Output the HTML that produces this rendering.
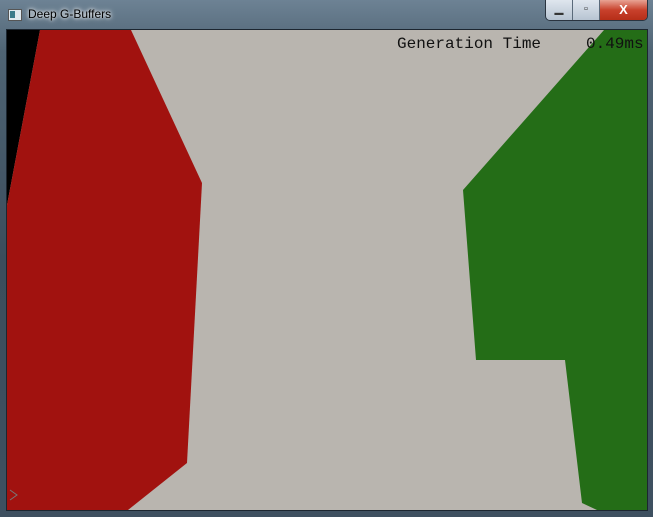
<!DOCTYPE html>
<html><head><style>
html,body{margin:0;padding:0;width:653px;height:517px;overflow:hidden;background:#3a4a5a}
.frame{position:absolute;left:0;top:0;width:653px;height:517px;background:linear-gradient(180deg,#6d8294 0%,#4f6474 10%,#3b4d5c 50%,#3e5060 100%)}
.title{position:absolute;left:28px;top:7px;font:12px "Liberation Sans",sans-serif;color:#000;text-shadow:0 0 6px #fff,0 0 3px #fff}
.ico{position:absolute;left:8px;top:9px;width:12px;height:10px;background:#dfe8ee;border:1px solid #555}
.ico:before{content:"";position:absolute;left:1px;top:1px;width:5px;height:7px;background:#3a7a8a}
.btns{position:absolute;left:545px;top:0;width:101px;height:20px;border:1px solid #2a3440;border-top:none;border-radius:0 0 5px 5px;overflow:hidden;display:flex}
.b{height:20px;background:linear-gradient(#dfe6ee,#b7c4d2);border-right:1px solid #5a6a7a;color:#333;font:bold 11px "Liberation Sans",sans-serif;text-align:center;line-height:19px}
.x{background:linear-gradient(#e8a394,#c8412c 50%,#b62e18);color:#fff;font-size:13px;flex:1;border:none}
svg{position:absolute;left:0;top:0}
.txt{position:absolute;top:35px;font:16px "Liberation Mono","DejaVu Sans Mono",monospace;color:#111;white-space:pre}
</style></head><body>
<div class="frame"></div>
<div class="ico"></div>
<div class="title">Deep G-Buffers</div>
<div class="btns"><div class="b" style="width:26px">▁</div><div class="b" style="width:26px">▫</div><div class="b x">X</div></div>
<svg width="653" height="517">
<rect x="6" y="29" width="642" height="482" fill="#1c2630"/>
<rect x="7" y="30" width="640" height="480" fill="#b9b5af"/>
<polygon points="7,30 40,30 7,205" fill="#000"/>
<polygon points="40,30 131,30 202,183 187,463 128,510 7,510 7,205" fill="#a1120f"/>
<polygon points="604,30 647,30 647,510 597,510 582,503 565,360 476,360 463,190" fill="#246d17"/>
<polyline points="10,490 17,495 10,500" fill="none" stroke="#777" stroke-width="1"/>
</svg>
<div class="txt" style="left:397px">Generation Time</div>
<div class="txt" style="left:586px">0.49ms</div>
</body></html>
